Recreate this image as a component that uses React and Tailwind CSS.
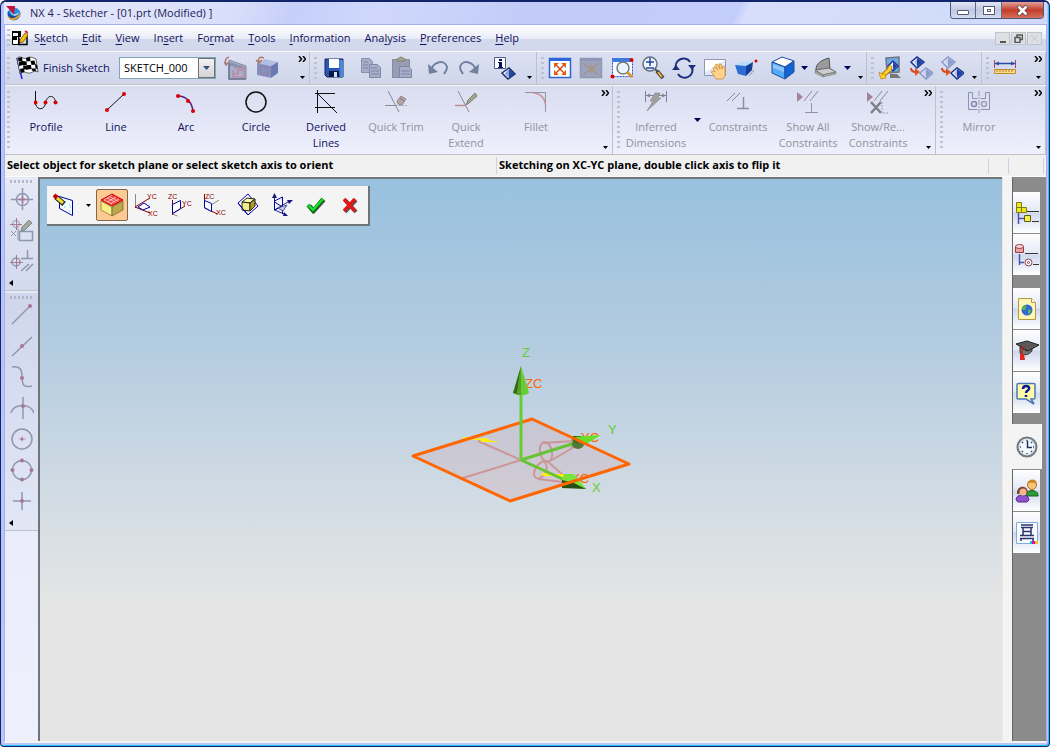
import { clsx } from 'clsx';

const menus = [
  ['S', 'k', 'etch'],
  ['', 'E', 'dit'],
  ['', 'V', 'iew'],
  ['In', 's', 'ert'],
  ['Fo', 'r', 'mat'],
  ['', 'T', 'ools'],
  ['', 'I', 'nformation'],
  ['Ana', 'l', 'ysis'],
  ['', 'P', 'references'],
  ['', 'H', 'elp'],
];

function Svg({ size = 24, children, className }) {
  return (
    <svg width={size} height={size} viewBox={`0 0 ${size} ${size}`} fill="none" className={clsx('shrink-0', className)} aria-hidden="true">
      {children}
    </svg>
  );
}

const Dot = ({ x, y, c = '#d80000', r = 2 }) => <circle cx={x} cy={y} r={r} fill={c} />;

/* ---------- title and menu ---------- */

const AppLogo = () => (
  <Svg size={16}>
    <circle cx="8" cy="9" r="6.5" fill="#2b8fe0" />
    <path d="M2 6c2 5 7 7 12 3-1 4-5 6-8 5.5C3 14 1 10 2 6z" fill="#0c4fa8" />
    <path d="M1 10c4 5 9 4 14-3-1 6-5 8-8 8s-5-2-6-5z" fill="#f59a1c" />
    <path d="M4 6c3 4 6 4 9 1-1 4-6 6-9-1z" fill="#bfe6ff" />
    <path d="M0 1l9 0-1 9-3-4z" fill="#c4123a" />
  </Svg>
);

const SketchDoc = () => (
  <Svg size={16}>
    <path d="M.5 1.5h8v5h-8zM.5 6.5h6v8h-6z" fill="#fff" stroke="#000" />
    <path d="M0 1h7v2H0zM0 7h5v3H0zM6 1h3v6H6z" fill="#000" />
    <path d="M7 7.500V14.500H15V5" stroke="#000" strokeWidth="1.500" />
    <path d="M8 10l5-7 3 2-5 7-3 1z" fill="#f7c500" stroke="#7a3b00" strokeWidth=".7" />
    <path d="M13 1l3 2" stroke="#e02020" strokeWidth="2" />
  </Svg>
);

/* ---------- standard toolbar ---------- */

const Flag = () => (
  <Svg>
    <path d="M2 2l5 21" stroke="#2222e0" strokeWidth="1.500" />
    <path d="M2 2c4-3 6 2 10 0s6 0 9 1l2 13c-4-3-6 2-10 1s-5-2-8 1z" fill="#fff" stroke="#222" strokeWidth=".7" />
    <path d="M3 2l4-1 .5 4-4 .5zM11 2l4-1 .5 4-4 .5zM7.500 5l4 .5.5 4-4-.5zM15.500 5l4-.500 1 4-4 .5zM4 6l3.500-1 .5 4-4 1zM12 9l4 0 .5 4-4 .5zM20 8l2 1 .5 4-2-.5zM8 9.500l4 .5.5 4-4-1zM16.500 12.500l4 0 .5 3-4-1zM5 13l4-1 .5 4-4 1z" fill="#000" />
  </Svg>
);

const OrientView = () => (
  <Svg>
    <path d="M5 4l17 6v13H5z" fill="#a9b0ca" stroke="#8188a5" />
    <path d="M6 6l15 5v2L6 10z" fill="#8a92b2" />
    <path d="M10 12h10M9 14v7h11v-7h-6v4H9" stroke="#b98aa4" strokeWidth="1.500" />
    <path d="M5 7v16h17" stroke="#6e7594" strokeWidth="1.500" />
    <path d="M5 1C1 2 1 5 2 8M0 6l2 3 3-3" stroke="#a97c80" strokeWidth="1.500" />
  </Svg>
);

const OrientModel = () => (
  <Svg>
    <path d="M2 7l8-4 13 3-7 4z" fill="#b3bfe2" />
    <path d="M2 7l14 3v12L2 19z" fill="#8391c0" />
    <path d="M16 10l7-4v11l-7 5z" fill="#6a7ab0" />
    <path d="M5 10l8 2v7l-8-2z" stroke="#a2789d" />
    <path d="M9 2C4 0 3 3 4 6M1 4l3 3 3-3" stroke="#b07868" strokeWidth="1.500" />
  </Svg>
);

const Save = () => (
  <Svg>
    <path d="M3 3h18v18H5l-2-2z" fill="#2d57b4" stroke="#122560" />
    <path d="M17 4h4v17h-3z" fill="#4b86de" />
    <path d="M7 3h10v9H7z" fill="#fff" />
    <path d="M7 15h10v6H7z" fill="#0a1840" />
    <path d="M12 16h3v5h-3z" fill="#c9e4f4" />
  </Svg>
);

const Copy = () => (
  <Svg>
    <path d="M2.500 2.500h8l3 3v11h-11z" fill="#a6aec8" stroke="#8991ae" />
    <path d="M10.500 8.500h8l3 3v10h-11z" fill="#a6aec8" stroke="#7f88a8" />
    <path d="M4 6h5M4 9h5M4 12h5M12 12h6M12 15h8M12 18h8" stroke="#7d87a9" />
  </Svg>
);

const Paste = () => (
  <Svg>
    <path d="M2.500 3.500h17v18h-17z" fill="#989db4" stroke="#848aa5" />
    <path d="M7 5V3l4-2 4 2v2z" fill="#a8a684" stroke="#80816f" />
    <path d="M9.500 10.500h9l3 3v8h-12z" fill="#a6aec8" stroke="#7c86a8" />
    <path d="M11 15h9M11 18h9" stroke="#7d87a9" />
  </Svg>
);

const Undo = () => (
  <Svg>
    <path d="M5 15C7 5 19 3 21 11c0 4-2 5-3 7" stroke="#7380a0" strokeWidth="2" />
    <path d="M2 8l1 10 9-2z" fill="#7380a0" />
  </Svg>
);

const Redo = () => (
  <Svg>
    <path d="M19 15C17 5 5 3 3 11c0 4 2 5 3 7" stroke="#7380a0" strokeWidth="2" />
    <path d="M22 8l-1 10-9-2z" fill="#7380a0" />
  </Svg>
);

const InfoObject = () => (
  <Svg>
    <path d="M1.500 1.500h11v11h-11z" fill="#fff" stroke="#555b88" />
    <path d="M6 3h3v2H6zM5 6h4v5h1v1H5v-1h1V7H5z" fill="#00106e" />
    <path d="M9 17l7-5 6 6-7 5z" fill="#fff" stroke="#1b2d6b" strokeWidth="1.500" />
    <path d="M12 17l4-4v9l-4-4z" fill="#8fa6e0" />
    <path d="M16 13l6 5-6 4z" fill="#24479e" />
  </Svg>
);

const Fit = ({ disabled }) => (
  <Svg>
    <path d="M1.500 2.500h21v19h-21z" fill={disabled ? '#9ba3bd' : '#fff'} stroke={disabled ? '#8f98b4' : '#2f62cc'} strokeWidth="1.500" />
    <path d="M1 2h22v3H1z" fill={disabled ? '#8f98b4' : '#2d66d8'} />
    {disabled ? (
      <>
        <path d="M4 7l5 4M20 7l-5 4M4 19l5-4M20 19l-5-4" stroke="#a98f95" strokeWidth="1.500" />
        <path d="M9 10l3-1 4 2v5l-4 1-3-2z" fill="#a59a88" />
      </>
    ) : (
      <>
        <path d="M8 9l8 8M16 9l-8 8" stroke="#d94d12" strokeWidth="1.500" />
        <path d="M6 7h5l-5 5zM18 7h-5l5 5zM6 19h5l-5-5zM18 19h-5l5-5z" fill="#e25a14" />
      </>
    )}
  </Svg>
);

const ZoomBox = () => (
  <Svg>
    <path d="M2.500 3.500h20v17h-20z" fill="#f7fbff" stroke="#2b50cc" strokeDasharray="2 1" />
    <path d="M2 2h19v4H2z" fill="#3b7be0" />
    <circle cx="13" cy="12" r="6" fill="#e9f5fc" stroke="#777" strokeWidth="1.500" />
    <path d="M17 16l5 5" stroke="#d89930" strokeWidth="3" />
    <Dot x="21.500" y="4" />
    <Dot x="2.500" y="20.500" />
  </Svg>
);

const ZoomInOut = () => (
  <Svg>
    <circle cx="9" cy="8" r="7" fill="#edf4fb" stroke="#666f7c" strokeWidth="1.500" />
    <path d="M5 6h8M9 2v8M5 12h8" stroke="#2444a8" strokeWidth="1.500" />
    <path d="M14 13l3 3" stroke="#555" strokeWidth="2" />
    <path d="M16 15l6 7" stroke="#444" strokeWidth="4" />
    <path d="M17 16l4 5" stroke="#f2b63c" strokeWidth="2" />
  </Svg>
);

const Rotate = () => (
  <Svg>
    <path d="M4 14C1 3 14-1 18 6M20 10c3 12-10 15-14 8" stroke="#1b2f7c" strokeWidth="2" />
    <path d="M0 14h8l-4-5zM16 9h8l-4 5z" fill="#1b2f7c" />
  </Svg>
);

const Pan = () => (
  <Svg>
    <path d="M1.500 3.500h21v16h-21z" fill="#e4e9f8" stroke="#8f97b5" />
    <path d="M2 4h20L2 16z" fill="#fff" />
    <path d="M10 12l2-1 3 3-3-5 2-1 3 5-1-5 2 0 1 5 1-3 2 1v9l-2 3h-7l-3-5-2-2 2-1 2 1z" fill="#ffd38a" stroke="#d28c35" strokeWidth=".8" />
  </Svg>
);

const Perspective = () => (
  <Svg>
    <path d="M1 9l6-3h12l-7 4z" fill="#b6ddf8" />
    <path d="M1 9l11 1v10l-8-2z" fill="#2b6ed6" />
    <path d="M12 10l7-4-1 8-6 6z" fill="#163e94" />
    <path d="M15 20l5-6" stroke="#999" />
    <Dot x="22" y="5" r="1.500" />
  </Svg>
);

const Shaded = () => (
  <Svg>
    <path d="M1 6l10-5 12 4-9 6z" fill="#fff" stroke="#1e4ea8" />
    <path d="M1 6l13 5v12L1 17z" fill="#56a9f5" stroke="#1e4ea8" />
    <path d="M14 11l9-6v11l-9 7z" fill="#1464d4" stroke="#1e4ea8" />
    <path d="M2 8l11 4v4L2 12z" fill="#8cc8ff" />
  </Svg>
);

const Laptop = () => (
  <Svg>
    <path d="M2 13c0-5 5-9 13-11l1 11-10 3z" fill="#9b9b9b" stroke="#555" />
    <path d="M1 14l14-2 7 4-13 3z" fill="#ccc" stroke="#666" />
    <path d="M1 15l8 4v2l-8-4zM9 19l13-3v2L9 21z" fill="#a8a8a8" stroke="#777" strokeWidth=".5" />
  </Svg>
);

const Preferences = () => (
  <Svg>
    <path d="M8 2l13-1v15l-12 1z" fill="#6faae4" stroke="#6f7480" strokeWidth="1.500" />
    <path d="M12 18h7l4 4H12z" fill="#777" />
    <path d="M10 10l5-5 5 5-5 5z" fill="#fff" stroke="#18399b" strokeWidth="1.500" />
    <path d="M15 6l4 4-4 4z" fill="#1b3fa3" />
    <path d="M3 21l9-8" stroke="#b57900" strokeWidth="5" />
    <path d="M10 12c0-3 4-3 4-1l-1 4-3 1z" fill="#ffd23e" stroke="#b57900" strokeWidth=".8" />
    <path d="M3 21l9-8" stroke="#ffd23e" strokeWidth="3" />
    <path d="M1 16l3 2 3 0 1 4-5 1z" fill="#ffcf33" stroke="#b57900" strokeWidth=".6" />
  </Svg>
);

const Diamond = ({ x, y, faded }) => (
  <g transform={`translate(${x} ${y})`} opacity={faded ? 0.4 : 1}>
    <path d="M-6 0l6-5 7 5-7 6z" fill="#fff" stroke="#18338a" strokeWidth="1.500" />
    <path d="M-3 0l3-4v8z" fill="#a9bdec" />
    <path d="M0-4l6 4-6 5z" fill="#203fa5" />
  </g>
);

const MoveDisplayed = ({ reversed }) => (
  <Svg>
    <Diamond x={8} y={6} faded={reversed} />
    <Diamond x={17} y={17} faded={!reversed} />
    <path d="M2 12c0 3 2 4 5 4" stroke="#d8441c" strokeWidth="2" />
    <path d="M6 12l5 4-5 4z" fill="#e8501c" />
  </Svg>
);

const Ruler = () => (
  <Svg>
    <path d="M1.500 4v8M22.500 4v8" stroke="#9b4b60" />
    <path d="M2 7.500h20" stroke="#2d4aa5" strokeWidth="1.500" />
    <path d="M2 7.500l4-2v4zM22 7.500l-4-2v4z" fill="#2d4aa5" />
    <path d="M1.500 13.500h21v4h-21z" fill="#ffe08a" stroke="#c58a2d" />
    <path d="M4 14v2M7 14v2M10 14v2M13 14v2M16 14v2M19 14v2" stroke="#a8772a" />
  </Svg>
);

/* ---------- curve toolbar ---------- */

const Profile = () => (
  <Svg>
    <path d="M1.500 1v13c2 7 9 6 10-1 1-8 9-9 10-1" stroke="#111" />
    <Dot x="1.500" y="12.500" />
    <Dot x="11.500" y="12.500" />
    <Dot x="21.500" y="12.500" />
  </Svg>
);

const Line = () => (
  <Svg>
    <path d="M3 20L20 4" stroke="#111" />
    <Dot x="3" y="20" />
    <Dot x="20" y="4" />
  </Svg>
);

const Arc = () => (
  <Svg>
    <path d="M4 6c8 0 14 6 15 15" stroke="#5a2180" strokeWidth="1.500" />
    <Dot x="4" y="6" />
    <Dot x="14" y="11" />
    <Dot x="19" y="21" />
  </Svg>
);

const Circle = () => (
  <Svg>
    <circle cx="12" cy="12" r="10" stroke="#111" strokeWidth="1.500" />
  </Svg>
);

const DerivedLines = () => (
  <Svg>
    <path d="M3.500 0v23M1 3.500h20M1 17.500h20M3 3l20 20" stroke="#111" />
  </Svg>
);

const QuickTrim = () => (
  <Svg>
    <path d="M4 1l11 21M1 15.500h11" stroke="#8b8c9a" />
    <path d="M12 15.500h12" stroke="#a8a8b4" strokeDasharray="2 1" />
    <path d="M13 11l4-5 5 3-4 6-4-1z" fill="#b9a3a3" stroke="#8f8a8a" />
    <path d="M16 8l4 3" stroke="#777" />
  </Svg>
);

const QuickExtend = () => (
  <Svg>
    <path d="M4 1l11 21" stroke="#8b8c9a" />
    <path d="M1 15.500h11" stroke="#bd8b96" strokeWidth="1.500" />
    <path d="M12 15l2-5 7-7 2 3-8 7z" fill="#a7a48c" stroke="#7f7d75" />
  </Svg>
);

const Fillet = () => (
  <Svg>
    <path d="M1 2.500h20.500V22" stroke="#92939f" />
    <path d="M8 2.500c9 1 13 5 13.500 13" stroke="#c59098" strokeWidth="1.500" />
  </Svg>
);

const InferredDims = () => (
  <Svg>
    <path d="M1.500 1v11M22.500 1v11M2 5.500h20" stroke="#808394" />
    <path d="M2 5.500l4-2v4zM22 5.500l-4-2v4z" fill="#808394" />
    <path d="M11 3h5l-2 5h3L3 21l6-10H6z" fill="#a0a09e" stroke="#8e8e90" strokeWidth=".7" />
  </Svg>
);

const Constraints = () => (
  <Svg>
    <path d="M1 11l8-8M6 11l8-8" stroke="#8c809e" />
    <path d="M17.500 7v11M11 18.500h12" stroke="#8b8da0" strokeWidth="1.500" />
  </Svg>
);

const ShowAll = ({ remove }) => (
  <Svg>
    <path d="M1 2l6 5-6 5z" fill="#a38594" />
    <path d="M8 11l8-10M14 11l8-10" stroke="#8c8a9c" />
    {remove ? (
      <>
        <path d="M5 12l10 11M15 12L5 23" stroke="#7d8088" strokeWidth="2.500" />
        <path d="M16 12v11h6" stroke="#9e9fb0" strokeDasharray="2 1" />
      </>
    ) : (
      <path d="M15.500 13v9M9 22.500h13" stroke="#9a8ea6" />
    )}
  </Svg>
);

const MirrorIcon = () => (
  <Svg>
    <path d="M1.500 2.500h4v6h5M1.500 2.500v17h9M22.500 2.500h-4v6h-5M22.500 2.500v17h-9" stroke="#8c91b5" />
    <path d="M12 1v22" stroke="#9b9db3" strokeDasharray="5 1 2 1" />
    <circle cx="7" cy="14" r="2.500" stroke="#8388b0" strokeWidth="1.500" />
    <circle cx="17" cy="14" r="2.500" stroke="#9ba0bc" strokeWidth="1.500" />
  </Svg>
);

/* ---------- left snap palette ---------- */

const gray = '#9096ad';
const rose = '#a97890';

const Target = () => (
  <Svg>
    <circle cx="12.500" cy="12.500" r="6" stroke={gray} strokeWidth="1.500" />
    <path d="M1 12.500h22M12.500 1v22" stroke={gray} strokeWidth="1.500" />
    <path d="M9 12.500h7M12.500 9v7" stroke={rose} strokeWidth="1.500" />
  </Svg>
);

const TargetEdit = () => (
  <Svg>
    <circle cx="6" cy="6" r="3.500" stroke={gray} />
    <path d="M0 6.500h12M6.500 0v12" stroke={rose} />
    <path d="M1 13l5 5M6 13l-5 5M8 10v12" stroke={gray} />
    <path d="M9.500 13.500h13v9h-13z" stroke={gray} strokeWidth="1.500" />
    <path d="M11 13l1-4 7-7 3 3-7 7z" fill="#a4a79c" stroke="#858b8c" />
  </Svg>
);

const TargetConstraint = () => (
  <Svg>
    <circle cx="6" cy="13" r="4" stroke={gray} strokeWidth="1.500" />
    <path d="M0 13.500h13M6.500 6v14" stroke={rose} />
    <path d="M17.500 1v8M11 9.500h12M11 22l8-7M16 22l7-7" stroke={gray} strokeWidth="1.500" />
  </Svg>
);

const SnapEnd = () => (
  <Svg>
    <path d="M2 21L20 3" stroke={gray} strokeWidth="1.500" />
    <Dot x="20" y="3" c={rose} />
  </Svg>
);

const SnapMid = () => (
  <Svg>
    <path d="M2 22L22 3" stroke={gray} strokeWidth="1.500" />
    <Dot x="12" y="12" c={rose} />
  </Svg>
);

const SnapControl = () => (
  <Svg>
    <path d="M2 2c8-1 10 2 10 10s2 11 10 9" stroke={gray} strokeWidth="1.500" />
    <Dot x="12" y="13" c={rose} />
  </Svg>
);

const SnapIntersect = () => (
  <Svg>
    <path d="M1 17c2-10 20-10 23 0M13 1v22" stroke={gray} strokeWidth="1.500" />
    <Dot x="13" y="10" c={rose} />
  </Svg>
);

const SnapCenter = () => (
  <Svg>
    <circle cx="12" cy="12" r="10" stroke={gray} strokeWidth="1.500" />
    <path d="M9 12h7M12 9v6" stroke={rose} strokeOpacity=".5" />
    <Dot x="12" y="12" c={rose} r={1.5} />
  </Svg>
);

const SnapQuadrant = () => (
  <Svg>
    <circle cx="12" cy="12" r="9.500" stroke={gray} strokeWidth="1.500" />
    <Dot x="12" y="2.500" c={rose} />
    <Dot x="12" y="21.500" c={rose} />
    <Dot x="2.500" y="12" c={rose} />
    <Dot x="21.500" y="12" c={rose} />
  </Svg>
);

const SnapPoint = () => (
  <Svg>
    <path d="M3 12h18M12 3v18" stroke={gray} strokeWidth="1.500" />
    <Dot x="12" y="12" c={rose} />
  </Svg>
);

/* ---------- plane picker ---------- */

const SketchPlane = () => (
  <Svg>
    <path d="M6.500 3.500l13 4v15l-13-7z" fill="#f4fbff" stroke="#0000a8" />
    <path d="M12 9h1M16 12h1M11 14h1M16 18h1M17 14h1" stroke="#21c9e8" />
    <path d="M3 4l8 7" stroke="#222" strokeWidth="5" />
    <path d="M3 4l7 6" stroke="#f3dc30" strokeWidth="3" />
    <path d="M1 2l3 3" stroke="#c80000" strokeWidth="4" />
  </Svg>
);

const FacePlane = () => (
  <Svg>
    <path d="M1 7l11-6 11 6-11 6z" fill="#f24040" stroke="#c00" />
    <path d="M1 8l11 6v9L1 17z" fill="#f5f08c" stroke="#8a6a20" strokeWidth=".7" />
    <path d="M12 14l11-6v9l-11 6z" fill="#b9a94c" stroke="#7a5a20" strokeWidth=".7" />
    <path d="M4 7l8 4M7 5l8 4M10 4l8 4M4 7l8-5M7 9l9-5M10 11l9-5" stroke="#fff" strokeWidth=".6" />
  </Svg>
);

const label = 'font-["Liberation_Sans"] text-[7px]';

const PlaneXY = () => (
  <Svg>
    <path d="M1.500 1v14" stroke="#888" />
    <path d="M1 14l15-9M1 14l15 6" stroke="#8b0000" />
    <path d="M4 14l6-4 6 4-7 3z" fill="#fff" stroke="#0000a8" />
    <text x="13" y="6" fill="#8b0000" className={label}>YC</text>
    <text x="14" y="23" fill="#8b0000" className={label}>XC</text>
  </Svg>
);

const PlaneYZ = () => (
  <Svg>
    <path d="M4.500 7v15M4 21l13-8" stroke="#8b0000" />
    <path d="M4.500 21l5 2" stroke="#888" />
    <path d="M4.500 11.500l8-4v8l-8 5z" fill="#fff" stroke="#0000a8" />
    <text x="0" y="6" fill="#8b0000" className={label}>ZC</text>
    <text x="14" y="13" fill="#8b0000" className={label}>YC</text>
  </Svg>
);

const PlaneXZ = () => (
  <Svg>
    <path d="M2.500 1v14l13 6" stroke="#8b0000" />
    <path d="M9 12l8-5" stroke="#888" />
    <path d="M2.500 7.500l7 3v8l-7-4z" fill="#fff" stroke="#0000a8" />
    <text x="3" y="6" fill="#8b0000" className={label}>ZC</text>
    <text x="14" y="22" fill="#8b0000" className={label}>XC</text>
  </Svg>
);

const DatumPlane = () => (
  <Svg>
    <path d="M2 10l10-9 10 12-10 9z" fill="#fff" stroke="#0000a8" />
    <path d="M6 9l5-4 8 1-5 4z" fill="#fdf8a8" stroke="#222" />
    <path d="M6 9l8 1v8l-8-1z" fill="#f4f088" stroke="#222" />
    <path d="M14 10l5-4v7l-5 5z" fill="#b29f20" stroke="#222" />
    <path d="M2 10l10 12 3-3" stroke="#0000a8" />
  </Svg>
);

const DatumCsys = () => (
  <Svg>
    <path d="M4.500 3v14l12 5M4.500 17l15-9" stroke="#24248a" />
    <path d="M4.500 8l8-4v9l-8 4zM4.500 9l8 5v7" stroke="#0000a8" />
    <path d="M2 5l2.500-5L7 5zM17 7l6 0-4 4zM13 23l1-4 4 4z" fill="#181878" />
    <path d="M8 15l9-3-4 6z" fill="#c8d0ea" stroke="#4450a0" />
  </Svg>
);

const Ok = () => (
  <Svg>
    <path d="M6 13l4 5L20 7" stroke="#555" strokeWidth="4" />
    <path d="M4 12l5 6L19 6" stroke="#07620f" strokeWidth="4" />
    <path d="M4 12l5 5L19 6" stroke="#18e028" strokeWidth="2.500" />
  </Svg>
);

const Cancel = () => (
  <Svg>
    <path d="M7 7l11 12M18 7L7 19" stroke="#555" strokeWidth="4" />
    <path d="M6 6l11 12M17 6L6 18" stroke="#e01818" strokeWidth="3.500" />
  </Svg>
);

/* ---------- resource bar ---------- */

const AssemblyNav = () => (
  <Svg>
    <path d="M3.500 12v11M3 17.500h6" stroke="#4a55b0" strokeWidth="1.500" />
    <path d="M1.500 6.500h5v5h-5zM6.500 6.500h5v5h-5zM1.500 1.500h5v5h-5z" fill="#f0e820" stroke="#827b10" />
    <path d="M9.500 14.500h6v6h-6z" fill="#f7ee50" stroke="#625c10" />
    <path d="M12 10.500h12M17 20.500h7" stroke="#333" />
  </Svg>
);

const PartNav = () => (
  <Svg>
    <path d="M4.500 11v11M4 19.500h5" stroke="#4a55b0" strokeWidth="1.500" />
    <path d="M.5 3.500h8v6h-8z" fill="#e5a5a5" stroke="#9b3b44" />
    <ellipse cx="4.500" cy="3.500" rx="4" ry="2" fill="#f6d8d8" stroke="#9b3b44" />
    <path d="M10 10.500h13M18 21.500h6" stroke="#333" />
    <circle cx="13.500" cy="19.500" r="3.500" fill="#fff" stroke="#8b4048" />
    <circle cx="13.500" cy="19.500" r="1" stroke="#8b4048" />
  </Svg>
);

const WebPage = () => (
  <Svg>
    <path d="M3.500 1.500h13l4 4v17h-17z" fill="#fff6b8" stroke="#b39a3c" />
    <path d="M16.500 1.500v4h4" fill="#fff" stroke="#b39a3c" />
    <circle cx="12" cy="13" r="5.500" fill="#3366d8" />
    <path d="M8 9c3-2 4 0 3 2s0 2-2 2-2-1-2-2zM13 13c2-1 4 0 3 2l-3 3z" fill="#52b84c" />
  </Svg>
);

const Training = () => (
  <Svg>
    <path d="M5 8v6c4 3 9 2 12-2V9l-6 3z" fill="#777" stroke="#333" />
    <path d="M1 5l11-3 12 4-11 6z" fill="#5a5a5a" stroke="#222" />
    <path d="M10 7l-3 2v6" stroke="#c9201a" strokeWidth="1.500" />
    <path d="M5 15h4l1 6H5z" fill="#e02a1e" />
  </Svg>
);

const HelpTab = () => (
  <Svg>
    <path d="M4 2.500h14c2 0 2 0 2 2V16c0 2 0 2-2 2h-2l3 5-8-5H4c-2 0-2 0-2-2V4c0-1 0-1.500 2-1.500z" fill="#fffaa8" stroke="#4b78b8" strokeWidth="1.500" />
    <path d="M8 8c0-4 7-4 6 0-1 2-3 2-3 4M11 14v2" stroke="#0b1a9a" strokeWidth="2.500" />
  </Svg>
);

const History = () => (
  <Svg>
    <circle cx="12" cy="12" r="9.500" fill="#d6e6f0" stroke="#77797c" strokeWidth="2" />
    <circle cx="12" cy="12" r="7" fill="#f4fbff" />
    <path d="M12 5v1M12 18v1M5 12h1M18 12h1M7 7l1 1M17 7l-1 1M7 17l1-1M17 17l-1-1" stroke="#314b78" strokeWidth="1.500" />
    <path d="M12.500 6v6.500H17" stroke="#26355c" strokeWidth="1.500" />
  </Svg>
);

const Roles = () => (
  <Svg>
    <path d="M11 16c0-6 12-6 12 0v1H11z" fill="#2c9a35" stroke="#1b6322" />
    <circle cx="17" cy="6" r="4.500" fill="#f7c27a" stroke="#b5741c" />
    <path d="M12 5c1-6 10-6 10 0-3-1-6-2-10 0z" fill="#cc8922" />
    <path d="M1 21c0-7 13-7 13 0l-2 2H3z" fill="#9152d0" stroke="#5c2b94" />
    <path d="M2 15c-1-9 11-10 11-1z" fill="#7c3e30" />
    <circle cx="8" cy="13" r="3.500" fill="#f5b98e" />
  </Svg>
);

const SystemScenes = () => (
  <Svg>
    <path d="M1.500 1.500h21v21h-21z" fill="#f8faff" stroke="#7faede" />
    <path d="M6 4h12M6 6.500h12M8 10.500h8M5 14.500h14M5 17.500h14M8 7v8M16 7v8M6 17v3M18 17v3" stroke="#28356e" strokeWidth="1.500" />
    <path d="M15 20h2v3h-2z" fill="#0cc" />
    <path d="M17 20h3v3h-3z" fill="#e0c" />
    <path d="M20 20h3v3h-3z" fill="#ec0" />
  </Svg>
);

/* ---------- shared bits ---------- */

function Grip({ className }) {
  return <span className={clsx('w-[3px] shrink-0 bg-[repeating-linear-gradient(180deg,#bfc2cc_0_2px,transparent_2px_5px)]', className)} />;
}

function DownArrow({ color = '#00005a' }) {
  return (
    <svg width="7" height="4" viewBox="0 0 7 4" aria-hidden="true">
      <path d="M0 0h7L3.500 4z" fill={color} />
    </svg>
  );
}

function Chevrons() {
  return (
    <svg width="8" height="6" viewBox="0 0 8 6" fill="none" aria-hidden="true">
      <path d="M1 0l2.500 3L1 6M5 0l2.500 3L5 6" stroke="#000" strokeWidth="1.500" />
    </svg>
  );
}

function Overflow({ more = true }) {
  return (
    <button aria-label="Toolbar Options" className="ml-auto flex w-[14px] shrink-0 flex-col items-center justify-between self-stretch py-1">
      <span className="flex h-2 items-start">{more && <Chevrons />}</span>
      <svg width="5" height="3" viewBox="0 0 5 3" className="mb-px" aria-hidden="true">
        <path d="M0 0h5L2.500 3z" fill="#000" />
      </svg>
    </button>
  );
}

function Tool({ name, children, className, width = 'w-[31px]' }) {
  return (
    <button aria-label={name} className={clsx('flex shrink-0 items-center justify-center', width, className)}>
      {children}
    </button>
  );
}

function Group({ className, children }) {
  return (
    <div className={clsx('flex min-w-0 items-center border-r border-[#bfc1c8] pl-[2px]', className)}>
      {children}
    </div>
  );
}

function BigTool({ icon, text, disabled }) {
  return (
    <button
      disabled={disabled}
      className={clsx('flex w-[70px] shrink-0 flex-col items-center gap-[5px] self-start pt-1 leading-4', disabled ? 'text-[#92929c]' : 'text-[#10105c]')}
    >
      {icon}
      <span className="w-[66px]">{text}</span>
    </button>
  );
}

const curveTools = [
  { text: 'Profile', icon: <Profile /> },
  { text: 'Line', icon: <Line /> },
  { text: 'Arc', icon: <Arc /> },
  { text: 'Circle', icon: <Circle /> },
  { text: 'Derived Lines', icon: <DerivedLines /> },
  { text: 'Quick Trim', icon: <QuickTrim />, disabled: true },
  { text: 'Quick Extend', icon: <QuickExtend />, disabled: true },
  { text: 'Fillet', icon: <Fillet />, disabled: true },
];

const constraintTools = [
  { text: 'Constraints', icon: <Constraints /> },
  { text: 'Show All Constraints', icon: <ShowAll /> },
  { text: 'Show/Re... Constraints', icon: <ShowAll remove /> },
];

const snapTools = [
  ['End Point', <SnapEnd />],
  ['Mid Point', <SnapMid />],
  ['Control Point', <SnapControl />],
  ['Intersection Point', <SnapIntersect />],
  ['Arc Center', <SnapCenter />],
  ['Quadrant Point', <SnapQuadrant />],
  ['Existing Point', <SnapPoint />],
];

const planeTools = [
  ['Face', <FacePlane />],
  ['XC-YC Plane', <PlaneXY />],
  ['YC-ZC Plane', <PlaneYZ />],
  ['ZC-XC Plane', <PlaneXZ />],
  ['Datum Plane', <DatumPlane />],
  ['Datum CSYS', <DatumCsys />],
  ['OK', <Ok />],
  ['Cancel', <Cancel />],
];

/* ---------- page sections ---------- */

function TitleBar() {
  const button = 'flex items-center justify-center border-r border-[#5d6a8c] bg-linear-to-b from-[#e3e7f6] via-[#c0c7df] to-[#d5dcf0]';
  return (
    <header className="flex h-[22px] shrink-0 items-center bg-[linear-gradient(115deg,#e6e9fb_0%,#d9dffa_22%,#c6cffa_28%,#cfd8fb_36%,#c3ccf8_50%,#c3cdfb_70%,#d6defb_71%,#cfdafa_100%)] pl-[2px]">
      <AppLogo />
      <h1 className="ml-2 text-[11px] text-[#22225a]">NX 4 - Sketcher - [01.prt (Modified) ]</h1>
      <div className="mr-[3px] ml-auto flex h-[17px] self-start overflow-hidden rounded-b border border-t-0 border-[#4c5878]">
        <button aria-label="Minimize" className={clsx(button, 'w-[25px]')}>
          <span className="mt-1 h-[5px] w-3 rounded-[1px] border border-[#555b70] bg-white" />
        </button>
        <button aria-label="Restore" className={clsx(button, 'w-[26px]')}>
          <span className="flex h-[9px] w-3 items-center justify-center border border-[#555b70] bg-white">
            <span className="h-[3px] w-1 border border-[#555b70]" />
          </span>
        </button>
        <button aria-label="Close" className="flex w-[41px] items-center justify-center bg-linear-to-b from-[#e0a19a] via-[#c23a28] to-[#d4705c]">
          <svg width="13" height="11" viewBox="0 0 13 11" aria-hidden="true">
            <path d="M2 1l9 9M11 1l-9 9" stroke="#5c3a44" strokeWidth="4" />
            <path d="M2.500 1.500l8 8M10.500 1.500l-8 8" stroke="#fff" strokeWidth="2.500" />
          </svg>
        </button>
      </div>
    </header>
  );
}

function MenuBar() {
  const button = 'flex h-[13px] w-[15px] items-center justify-center border border-[#c0c3cc] bg-[#dfe0e4]';
  return (
    <nav className="flex h-[27px] shrink-0 items-center border-t border-[#9eb0f0] bg-[linear-gradient(180deg,#ffffff_0%,#e9ecf7_52%,#d2d9ec_54%,#d2d9ec_100%)] pl-[2px]">
      <Grip className="mr-[2px] h-[18px]" />
      <SketchDoc />
      <ul className="ml-[6px] flex gap-[14px] text-[#10105c]">
        {menus.map(([before, key, after]) => (
          <li key={before + key + after}>
            <button>
              {before}
              <u className="underline-offset-2">{key}</u>
              {after}
            </button>
          </li>
        ))}
      </ul>
      <div className="mr-1 ml-auto flex gap-px">
        <button aria-label="Minimize document" className={button}>
          <span className="mt-[7px] h-[2px] w-[6px] bg-[#555]" />
        </button>
        <button aria-label="Restore document" className={button}>
          <svg width="9" height="9" viewBox="0 0 9 9" fill="none" aria-hidden="true">
            <path d="M3 3V1h5.500v4.500H6M1 3.500h5v5H1z" stroke="#555" strokeWidth="1.500" />
          </svg>
        </button>
        <button aria-label="Close document" disabled className={button}>
          <svg width="9" height="9" viewBox="0 0 9 9" aria-hidden="true">
            <path d="M1 1l7 7M8 1L1 8" stroke="#cfd1d6" strokeWidth="1.500" />
          </svg>
        </button>
      </div>
    </nav>
  );
}

function StandardToolbar() {
  return (
    <div className="flex h-[34px] shrink-0 items-stretch gap-[2px] border-y border-t-[#f7f8fc] border-b-[#bfc1c8] bg-linear-to-b from-[#dce1f2] to-[#cfd6ea]">
      <Group className="w-[305px]">
        <Grip className="h-[22px]" />
        <button className="flex items-center text-[#10105c]">
          <span className="ml-[5px]"><Flag /></span>
          <span className="ml-1 w-[76px] text-left whitespace-nowrap">Finish Sketch</span>
        </button>
        <div className="relative flex">
          <select aria-label="Sketch name" className="h-[22px] w-[97px] appearance-none border border-[#7fa5b8] bg-white pl-1 leading-4 text-black" defaultValue="SKETCH_000">
            <option>SKETCH_000</option>
          </select>
          <span className="pointer-events-none absolute inset-y-px right-px flex w-[17px] items-center justify-center border border-[#707070] bg-linear-to-b from-[#f2f2f2] to-[#d4d4d6]">
            <DownArrow color="#34517c" />
          </span>
        </div>
        <Tool name="Orient View to Sketch" className="ml-1"><OrientView /></Tool>
        <Tool name="Orient View to Model"><OrientModel /></Tool>
        <Overflow />
      </Group>
      <Group className="w-[225px]">
        <Grip className="h-[22px]" />
        <Tool name="Save" className="mr-[6px] ml-px"><Save /></Tool>
        <Tool name="Copy"><Copy /></Tool>
        <Tool name="Paste"><Paste /></Tool>
        <Tool name="Undo" className="ml-[5px]"><Undo /></Tool>
        <Tool name="Redo"><Redo /></Tool>
        <Tool name="Object Information" className="ml-[5px]"><InfoObject /></Tool>
        <Overflow more={false} />
      </Group>
      <Group className="flex-1">
        <Grip className="h-[22px]" />
        <Tool name="Fit"><Fit /></Tool>
        <Tool name="Fit View to Selection"><Fit disabled /></Tool>
        <Tool name="Zoom"><ZoomBox /></Tool>
        <Tool name="Zoom In/Out"><ZoomInOut /></Tool>
        <Tool name="Rotate"><Rotate /></Tool>
        <Tool name="Pan"><Pan /></Tool>
        <Tool name="Perspective"><Perspective /></Tool>
        <Tool name="Shaded" className="ml-[6px]"><Shaded /></Tool>
        <Tool name="Rendering Style" width="w-3"><DownArrow /></Tool>
        <Tool name="Orient View"><Laptop /></Tool>
        <Tool name="Orientations" width="w-3"><DownArrow /></Tool>
        <Overflow more={false} />
      </Group>
      <Group className="w-[113px]">
        <Grip className="h-[22px]" />
        <Tool name="Edit Object Display"><Preferences /></Tool>
        <Tool name="Show"><MoveDisplayed /></Tool>
        <Tool name="Hide"><MoveDisplayed reversed /></Tool>
        <Overflow more={false} />
      </Group>
      <Group className="w-[62px]">
        <Grip className="h-[22px]" />
        <Tool name="Measure Distance"><Ruler /></Tool>
        <Overflow />
      </Group>
    </div>
  );
}

function SketchToolbar() {
  return (
    <div className="flex h-[70px] shrink-0 items-stretch gap-[2px] border-y border-t-[#f7f8fc] border-b-[#bfc1c8] bg-linear-to-b from-[#d8ddf0] to-[#efeffd] text-center">
      <Group className="flex-1">
        <Grip className="mr-px h-[58px]" />
        {curveTools.map((tool) => (
          <BigTool key={tool.text} {...tool} />
        ))}
        <Overflow />
      </Group>
      <Group className="w-[321px]">
        <Grip className="mr-px h-[58px]" />
        <BigTool text="Inferred Dimensions" icon={<InferredDims />} disabled />
        <Tool name="Dimension types" width="w-3"><DownArrow /></Tool>
        {constraintTools.map((tool) => (
          <BigTool key={tool.text} {...tool} disabled />
        ))}
        <Overflow />
      </Group>
      <Group className="w-[108px]">
        <Grip className="mr-px h-[58px]" />
        <BigTool text="Mirror" icon={<MirrorIcon />} disabled />
        <Overflow />
      </Group>
    </div>
  );
}

function StatusBar() {
  return (
    <div className="flex h-[22px] shrink-0 items-center border-b border-[#fafafa] bg-[#f1f1f2] text-[11px] font-bold text-black">
      <p className="w-[491px] pl-[2px] whitespace-nowrap">Select object for sketch plane or select sketch axis to orient</p>
      <p className="flex-1 border-l border-[#ccd2e6] pl-[2px] whitespace-nowrap">Sketching on XC-YC plane, double click axis to flip it</p>
      <span className="h-4 w-5 border-l border-[#ccd2e6]" />
      <span className="mr-[2px] h-4 w-9 border-x border-[#ccd2e6]" />
    </div>
  );
}

function SnapPalette() {
  const grip = 'mx-auto h-[3px] w-6 bg-[repeating-linear-gradient(90deg,#b4b8c8_0_2px,transparent_2px_4px)]';
  const button = 'flex h-[31px] items-center justify-center';
  const collapse = (
    <button aria-label="Collapse" className="flex h-[14px] items-center pl-1">
      <svg width="4" height="6" viewBox="0 0 4 6" aria-hidden="true"><path d="M4 0v6L0 3z" fill="#000" /></svg>
    </button>
  );
  return (
    <aside className="flex w-[33px] shrink-0 flex-col bg-linear-to-b from-[#e2e7f7] to-[#eff0fe]">
      <div className="flex flex-col border-b border-[#bfc1c8] bg-linear-to-b from-[#e6e9f6] to-[#d3daee] pt-[3px]">
        <span className={grip} />
        <button aria-label="Point" className={button}><Target /></button>
        <button aria-label="Edit Point" className={button}><TargetEdit /></button>
        <button aria-label="Constraint Point" className={button}><TargetConstraint /></button>
        {collapse}
      </div>
      <div className="mt-[2px] flex flex-col border-b border-[#bfc1c8] bg-linear-to-b from-[#cfd6ec] to-[#e2e7f6] pt-[3px]">
        <span className={grip} />
        {snapTools.map(([name, icon]) => (
          <button key={name} aria-label={name} className={button}>{icon}</button>
        ))}
        {collapse}
      </div>
    </aside>
  );
}

function PlanePicker() {
  return (
    <div className="absolute top-[7px] left-[7px] flex h-10 items-center gap-[2px] border-r-2 border-b-2 border-[#6f7478] bg-[#f4f4f4] px-[2px]">
      <button aria-label="Sketch Plane" className="flex w-8 justify-center"><SketchPlane /></button>
      <button aria-label="Plane options" className="flex w-[11px] justify-center">
        <svg width="5" height="3" viewBox="0 0 5 3" aria-hidden="true"><path d="M0 0h5L2.500 3z" fill="#000" /></svg>
      </button>
      {planeTools.map(([name, icon], index) => (
        <button
          key={name}
          aria-label={name}
          className={clsx('flex size-8 items-center justify-center', index === 0 && 'rounded-xs border border-[#7b6a58] bg-[#ffc992]')}
        >
          {icon}
        </button>
      ))}
    </div>
  );
}

function CoordinateSystem() {
  const text = 'font-["Liberation_Sans"] text-[13px]';
  return (
    <svg width="250" height="240" viewBox="-125 -120 250 240" fill="none" role="img" aria-label="Sketch coordinate system">
      <path d="M-108-4L11-41 108 4-11 41z" fill="#d0a8b4" fillOpacity=".3" />
      <path d="M0 0L-43-19M0 0l-61 19" stroke="#cc9697" strokeWidth="2" />
      <ellipse cx="25" cy="-8" rx="6" ry="10" transform="rotate(-12 25 -8)" stroke="#cc9697" strokeWidth="2" />
      <path d="M22-17l31-2M29 1l26-15M54-18l-4 6" stroke="#cc9697" strokeWidth="2" />
      <path d="M28 2c-7-4-15 5-15 13 2 5 6 4 9 1 5-5 5-12 0-15M26 1l16 14M17 19l25 3" stroke="#cc9697" strokeWidth="2" />
      <path d="M-58-23h5l3 2 15-1 6 3h5v1h-16v-2h-18zM20 13h6l2 1h12l6 1v2H33l-1-1H22z" fill="#ffee0a" />
      <path d="M0 0l57-18M0 0l46 21" stroke="#69c233" strokeWidth="3" />
      <text x="4" y="-72" fill="#ff6600" className={text}>ZC</text>
      <text x="60" y="-18" fill="#ff6600" className={text}>YC</text>
      <text x="50" y="23" fill="#ff6600" className={text}>XC</text>
      <ellipse cx="57" cy="-16" rx="6" ry="5" fill="#4f7a38" />
      <path d="M51-24h10l-5 8-5-4z" fill="#376b18" />
      <path d="M54-23l26-2-15 9z" fill="#66df24" />
      <path d="M41 20h15l9 9-24-1z" fill="#275012" />
      <path d="M41 20l2-6 10 0 6 7 6 8-12-6z" fill="#78e53a" />
      <path d="M-108-4L11-41 108 4-11 41z" stroke="#ff6600" strokeWidth="3" strokeLinejoin="round" />
      <path d="M0 0v-66" stroke="#66cc33" strokeWidth="3" />
      <path d="M0-94l8 27c-4 3-12 3-16 0z" fill="#66cc33" />
      <path d="M0-94l-4 28-4-1z" fill="#376b18" />
      <path d="M0-94v29h-4z" fill="#54a02c" />
      <text x="1" y="-103" fill="#66cc33" className={text}>Z</text>
      <text x="87" y="-26" fill="#66cc33" className={text}>Y</text>
      <text x="71" y="32" fill="#66cc33" className={text}>X</text>
    </svg>
  );
}

function ResourceBar() {
  const tab = 'flex h-[41px] w-[27px] items-center justify-center bg-[linear-gradient(180deg,#ffffff_0%,#e3e8f6_48%,#d0d8ee_52%,#ffffff_100%)]';
  return (
    <aside className="flex w-[34px] shrink-0 flex-col border-l border-[#666] bg-[#8b8b8b] pt-[15px]">
      <div className="flex flex-col gap-px">
        <button aria-label="Assembly Navigator" className={tab}><AssemblyNav /></button>
        <button aria-label="Part Navigator" className={tab}><PartNav /></button>
      </div>
      <div className="mt-[13px] flex flex-col gap-px">
        <button aria-label="Internet Explorer" className={tab}><WebPage /></button>
        <button aria-label="Training" className={tab}><Training /></button>
        <button aria-label="Help" className={tab}><HelpTab /></button>
      </div>
      <button aria-label="History" className="mt-[11px] -ml-px flex h-[45px] w-[30px] items-center justify-center border-r border-white bg-[#f3f3f3]"><History /></button>
      <div className="mt-px flex flex-col gap-px">
        <button aria-label="Roles" className={tab}><Roles /></button>
        <button aria-label="System Scenes" className={tab}><SystemScenes /></button>
      </div>
    </aside>
  );
}

export default function App() {
  return (
    <div className='flex h-screen flex-col overflow-hidden rounded-t-md rounded-b-sm border border-t-2 border-[#12246a] bg-[#b9c4fa] pr-[2px] pb-[3px] pl-[3px] font-["Open_Sans",sans-serif] text-[11px] shadow-[inset_-1px_-1px_0_#19c8fa]'>
      <TitleBar />
      <div className="flex min-h-0 flex-1 flex-col border-x border-b-2 border-[#a3b2f2] border-b-[#f4f4f0] bg-[#f1f1f2]">
        <MenuBar />
        <StandardToolbar />
        <SketchToolbar />
        <StatusBar />
        <div className="flex min-h-0 flex-1">
          <SnapPalette />
          <main className="relative flex min-w-0 flex-1 items-center justify-center border-t-2 border-l-2 border-[#717579] bg-[linear-gradient(180deg,#98c1de_0%,#b2cbe0_28%,#d3dce4_58%,#e5e5e5_76%,#e5e5e5_100%)]">
            <PlanePicker />
            <CoordinateSystem />
          </main>
          <div className="w-[10px] shrink-0 border-l border-[#e8e8dc] bg-[#f4f4f4]" />
          <ResourceBar />
        </div>
      </div>
    </div>
  );
}
